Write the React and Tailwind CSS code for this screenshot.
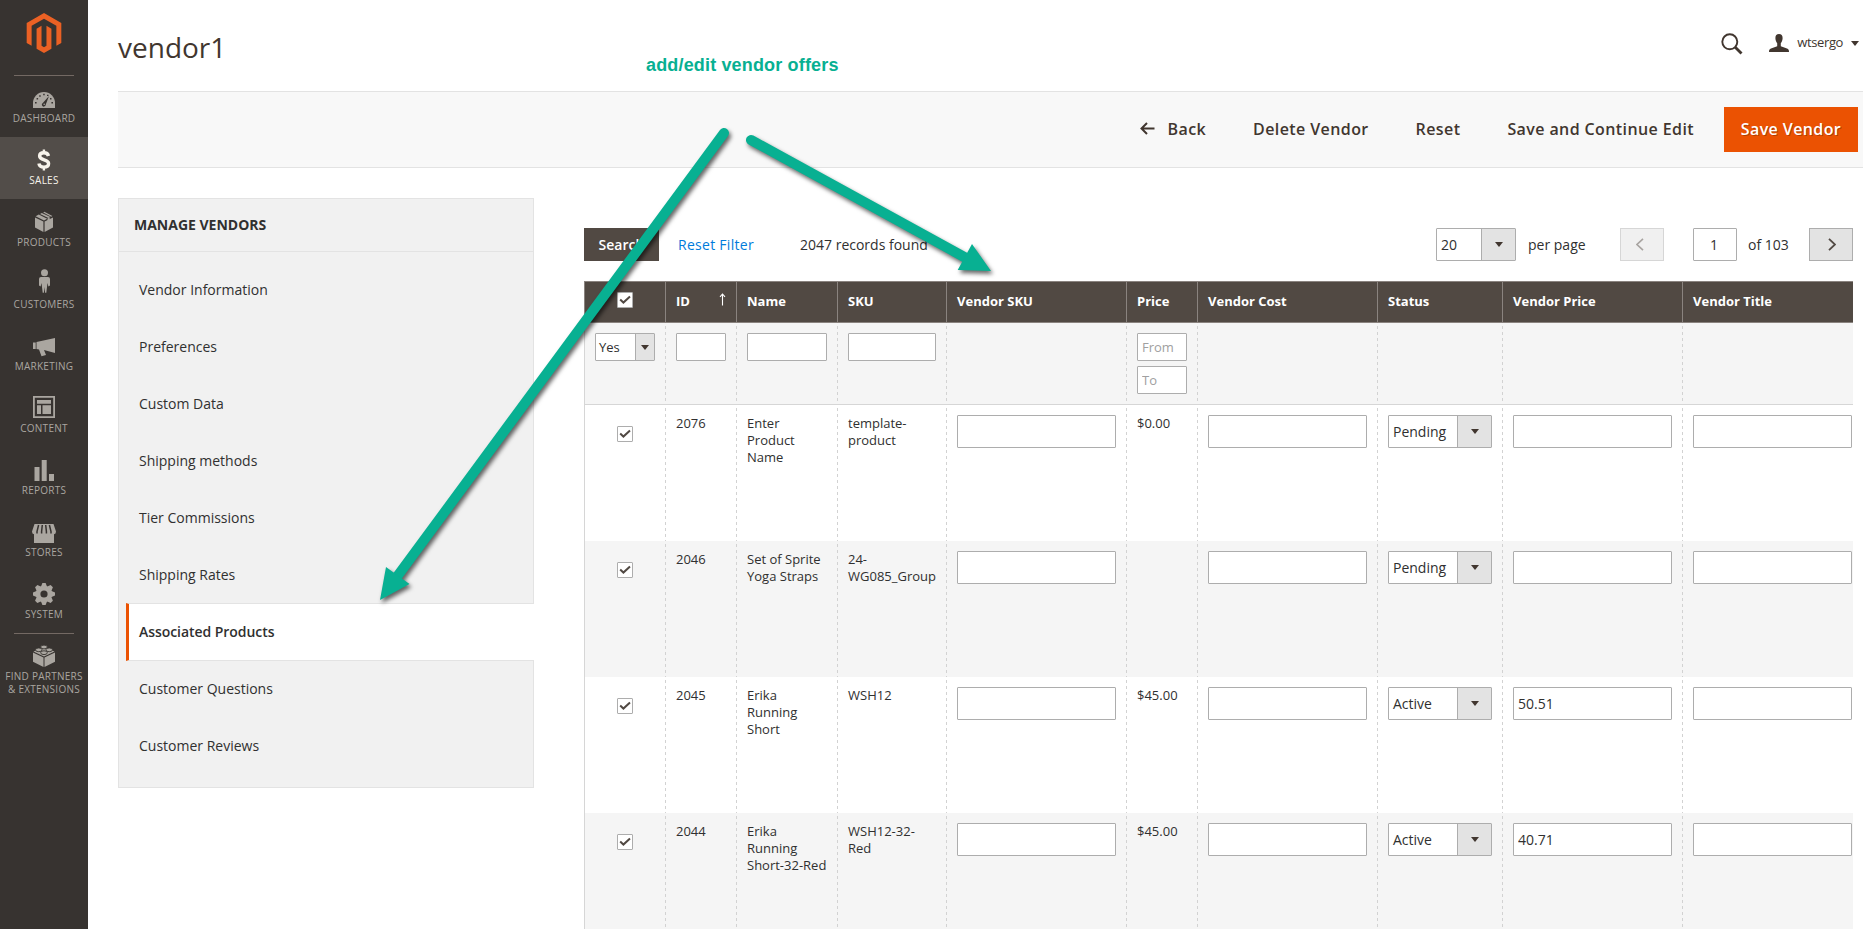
import { useState } from "react";
import clsx from "clsx";

const menu = [
  { label: "Dashboard", icon: DashboardIcon },
  { label: "Sales", icon: SalesIcon, active: true },
  { label: "Products", icon: ProductsIcon },
  { label: "Customers", icon: CustomersIcon },
  { label: "Marketing", icon: MarketingIcon },
  { label: "Content", icon: ContentIcon },
  { label: "Reports", icon: ReportsIcon },
  { label: "Stores", icon: StoresIcon },
  { label: "System", icon: SystemIcon },
];

const tabs = [
  "Vendor Information",
  "Preferences",
  "Custom Data",
  "Shipping methods",
  "Tier Commissions",
  "Shipping Rates",
  "Associated Products",
  "Customer Questions",
  "Customer Reviews",
];

const columns = ["Name", "SKU", "Vendor SKU", "Price", "Vendor Cost", "Status", "Vendor Price", "Vendor Title"];

const products = [
  { id: 2076, name: "Enter Product Name", sku: "template-product", price: "$0.00", status: "Pending", vendorPrice: "" },
  { id: 2046, name: "Set of Sprite Yoga Straps", sku: "24-WG085_Group", price: "", status: "Pending", vendorPrice: "" },
  { id: 2045, name: "Erika Running Short", sku: "WSH12", price: "$45.00", status: "Active", vendorPrice: "50.51" },
  { id: 2044, name: "Erika Running Short-32-Red", sku: "WSH12-32-Red", price: "$45.00", status: "Active", vendorPrice: "40.71" },
];

const gridCols = "grid grid-cols-[81px_71px_101px_109px_180px_71px_180px_125px_180px_171px]";

function MenuSvg({ children }) {
  return (
    <svg width="24" height="28" viewBox="0 0 24 28" className="overflow-visible" fill="currentColor">
      {children}
    </svg>
  );
}

function DashboardIcon() {
  return (
    <MenuSvg>
      <path d="M1 27v-5a11 11 0 0 1 22 0v5z" />
      <g fill="#373330">
        <path d="M17 15l-3.2 8.6a2 2 0 1 1-3-1.7z" />
        <path d="M3 21h1.6v1.4H3zM4.6 17h1.5v1.5H4.6zM7.2 14.2h1.5v1.5H7.2zM11.2 12.8h1.5v1.5h-1.5zM15 13.8h1.5v1.3H15zM18 17h1.5v1.5H18zM19.4 21H21v1.4h-1.6z" />
      </g>
      <circle cx="12.2" cy="23.2" r="0.8" />
    </MenuSvg>
  );
}

function SalesIcon() {
  return (
    <MenuSvg>
      <path
        d="M16.5 13c-.5-2-2-3.200-4.600-3.200-2.700 0-4.300 1.400-4.300 3.300 0 4.800 9 2.700 9 7.400 0 2.300-1.800 3.600-4.700 3.600-2.900 0-4.600-1.300-5-3.600"
        fill="none"
        stroke="currentColor"
        strokeWidth="3.4"
      />
      <path d="M10.700 6.500h2.400v3.500h-2.400zM10.700 23h2.400v4.500h-2.400z" />
    </MenuSvg>
  );
}

function ProductsIcon() {
  return (
    <MenuSvg>
      <path d="M3 12.400l8.400 4V27L3 22.600zM21 12.400l-8.400 4V27l8.400-4.400z" />
      <path d="M3.600 11.200l3.200-1.600 8.400 4.200-3.200 1.600zM8 8.900l1.800-.9 8.600 4.100-2 1zM11.200 7.400l1.200-.6 8 4.200-1.200.7z" />
      <path d="M15.500 13.400l2.200-1v3.200l-2.200 1z" />
    </MenuSvg>
  );
}

function CustomersIcon() {
  return (
    <MenuSvg>
      <circle cx="12.500" cy="5.700" r="3.500" />
      <path d="M9 10h7q2 0 2 2v6.500l-1.600 1-.9-3.500-1.200 9.800h-1.200L12.500 20l-.600 5.800h-1.200L9.500 16l-.900 3.500-1.600-1V12q0-2 2-2z" />
    </MenuSvg>
  );
}

function MarketingIcon() {
  return (
    <MenuSvg>
      <path d="M1 13.500h2.700V20H1zM4.500 13L23 9v15l-11-3 2 5-4.500 1.200L7 20.500l-2.500-.500z" />
    </MenuSvg>
  );
}

function ContentIcon() {
  return (
    <MenuSvg>
      <path d="M1 5h22v22H1zM2.800 6.800v18.400h18.400V6.800z" fillRule="evenodd" />
      <path d="M5 9h14v3.800H5zM5 14.200h4V23H5zM10.500 14.200H19V23h-8.500z" />
    </MenuSvg>
  );
}

function ReportsIcon() {
  return (
    <MenuSvg>
      <path d="M2.500 14h5v14h-5zM9.700 7h5v21h-5zM17 21h5v7h-5z" />
    </MenuSvg>
  );
}

function StoresIcon() {
  return (
    <MenuSvg>
      <path d="M2.500 9h19L24 16.500q0 2.500-2 2.700V28H2v-8.800Q0 19 0 16.500z" />
      <path
        d="M6.600 10L5 16.500v2M10.300 10l-.700 6.500v2M13.700 10l.700 6.500v2M17.400 10l1.600 6.500v2"
        stroke="#373330"
        strokeWidth="1.500"
        fill="none"
      />
    </MenuSvg>
  );
}

function SystemIcon() {
  return (
    <MenuSvg>
      <g transform="translate(12 17)">
        {[0, 45, 90, 135].map((deg) => (
          <path key={deg} d="M-3.200-7L-1.600-11h3.200l1.600 4V7L1.600 11h-3.200l-1.600-4z" transform={`rotate(${deg})`} />
        ))}
        <circle r="8" />
        <circle r="3.600" fill="#373330" />
      </g>
    </MenuSvg>
  );
}

function PartnersIcon() {
  return (
    <MenuSvg>
      <path d="M1 13.500l10.500 5V28L1 22.800zM23 13.500l-10.500 5V28L23 22.800z" />
      <path d="M1.500 12.500L12 8l10.500 4.500L12 17.500z" />
      <g stroke="#373330" strokeWidth="0.900">
        <ellipse cx="12" cy="8" rx="3.300" ry="1.900" />
        <ellipse cx="6.800" cy="10.800" rx="3.300" ry="1.900" />
        <ellipse cx="17.200" cy="10.800" rx="3.300" ry="1.900" />
        <ellipse cx="12" cy="13.700" rx="3.300" ry="1.900" />
      </g>
    </MenuSvg>
  );
}

function Caret() {
  return (
    <svg width="8" height="5" viewBox="0 0 8 5" fill="#41362f">
      <path d="M0 0h8L4 5z" />
    </svg>
  );
}

function Checkbox() {
  return (
    <span className="flex h-4 w-4 items-center justify-center rounded-[1px] border border-[#adadad] bg-white">
      <svg width="14" height="14" viewBox="0 0 14 14" fill="none" stroke="#514943" strokeWidth="2">
        <path d="M2.200 6.600l3.200 3L12 3.500" />
      </svg>
    </span>
  );
}

function Select({ value, small, className }) {
  return (
    <div
      className={clsx(
        "flex rounded-[1px] border border-[#adadad] bg-white",
        small ? "h-7 text-[13px]" : "h-[33px] text-sm",
        className
      )}
    >
      <span className={clsx("flex flex-1 items-center", small ? "pl-[3px]" : "pl-1")}>{value}</span>
      <span
        className={clsx(
          "flex items-center justify-center border-l border-[#adadad] bg-[#e3e3e3]",
          small ? "w-[19px]" : "w-[34px]"
        )}
      >
        <Caret />
      </span>
    </div>
  );
}

function Input({ small, className, ...props }) {
  return (
    <input
      className={clsx(
        "block rounded-[1px] border border-[#adadad] bg-white px-1 text-[#303030] placeholder:text-[#a0a0a0]",
        small ? "h-7 text-[13px]" : "h-[33px] text-sm",
        className || "w-full"
      )}
      {...props}
    />
  );
}

function Cell({ first, className, children }) {
  return (
    <div
      className={clsx(
        "pt-2.5 pr-2.5",
        first
          ? "border-l border-[#d6d6d6] pl-2.5"
          : "bg-[linear-gradient(#d2d2d2_50%,transparent_50%)] bg-[length:1px_6px] bg-[position:0_3px] bg-repeat-y pl-[11px]",
        className
      )}
    >
      {children}
    </div>
  );
}

function Sidebar() {
  return (
    <aside className="flex w-[88px] shrink-0 flex-col items-center bg-[#373330] text-[#aaa6a0]">
      <div className="flex h-[75px] justify-center pt-[13px]">
        <svg width="40" height="40" viewBox="0 0 24 24" fill="#eb6124">
          <path d="M12 24l-4.455-2.572v-12l2.970-1.715v12.001l1.485.902 1.485-.902V7.713l2.971 1.715v12L12 24zM22.391 6v12l-2.969 1.714V7.713L12 3.430 4.574 7.713v12.001L1.609 18V6L12.005 0 22.391 6z" />
        </svg>
      </div>
      <div className="-mb-px h-px w-[60px] bg-[#736963]" />
      {menu.map(({ label, icon: Icon, active }) => (
        <div
          key={label}
          className={clsx(
            "flex h-[62px] w-full flex-col items-center gap-[3px] pt-1.5",
            active && "bg-[#524d49] text-[#f7f3eb]"
          )}
        >
          <Icon />
          <span className="text-[10px] leading-3 tracking-[0.025em] uppercase">{label}</span>
        </div>
      ))}
      <div className="-mb-px h-px w-[60px] bg-[#736963]" />
      <div className="flex w-full flex-col items-center gap-[3px] pt-1.5">
        <PartnersIcon />
        <span className="text-center text-[10px] leading-[13px] tracking-[0.025em] uppercase">
          Find Partners
          <br />
          &amp; Extensions
        </span>
      </div>
    </aside>
  );
}

function Header() {
  return (
    <header className="flex h-[91px] justify-between pr-1">
      <h1 className="pt-7 text-[28px] leading-[38px] text-[#41362f]">vendor1</h1>
      <div className="flex h-[86px] items-center">
        <svg width="22" height="22" viewBox="0 0 22 22" fill="none" stroke="#41362f" className="mt-0.5 mr-[26px]">
          <circle cx="8.800" cy="8.800" r="7.500" strokeWidth="1.900" />
          <path d="M14 14l6.500 6.500" strokeWidth="2.800" />
        </svg>
        <svg width="20" height="18" viewBox="0 0 20 18" fill="#41362f" className="mr-2">
          <path d="M10 0c2.500 0 3.700 1.700 3.600 4.200-.1 2-.8 3.900-1.800 5.100v2.900l6.200 2.300c1.500.6 2 1.300 2 3.500H0c0-2.200.500-2.900 2-3.500l6.200-2.300V9.300C7.200 8.100 6.500 6.200 6.400 4.200 6.300 1.700 7.500 0 10 0z" />
        </svg>
        <span className="mr-2 text-[13px] tracking-[-0.03em] text-[#41362f]">wtsergo</span>
        <Caret />
      </div>
    </header>
  );
}

function PageActions() {
  return (
    <div className="flex h-[77px] items-center justify-end border-y border-[#e3e3e3] bg-[#f8f8f8] pr-[5px] text-base font-semibold tracking-[0.025em] text-[#41362f]">
      <button className="mr-[47px] flex items-center gap-[13px] pb-0.5">
        <svg width="15" height="13" viewBox="0 0 15 13" fill="none" stroke="#41362f" strokeWidth="2">
          <path d="M1.500 6.500H14.500M7 1L1.500 6.500 7 12" />
        </svg>
        Back
      </button>
      <button className="mr-[47px] pb-0.5">Delete Vendor</button>
      <button className="mr-[47px] pb-0.5">Reset</button>
      <button className="mr-[30px] pb-0.5">Save and Continue Edit</button>
      <button className="h-[45px] w-[134px] bg-[#eb5202] pb-0.5 text-white [text-shadow:1px_1px_0_rgba(0,0,0,0.25)]">
        Save Vendor
      </button>
    </div>
  );
}

function VendorTabs({ current, onSelect }) {
  return (
    <nav className="h-[590px] w-[416px] shrink-0 border border-[#e3e3e3] bg-[#f1f1f1]">
      <div className="h-[53px] border-b border-[#e3e3e3] pt-[11px] pl-[15px] text-sm leading-[29px] font-bold uppercase">
        Manage Vendors
      </div>
      <ul className="pt-[9px]">
        {tabs.map((tab) => (
          <li
            key={tab}
            onClick={() => onSelect(tab)}
            className={clsx(
              "flex h-[57px] cursor-pointer items-center text-sm",
              tab === current
                ? "relative z-10 -mr-px -mb-px ml-[7px] h-[58px] border-y border-l-[3px] border-y-[#e3e3e3] border-l-[#eb5202] bg-white pl-2.5 font-semibold tracking-[-0.004em]"
                : "pl-5"
            )}
          >
            {tab}
          </li>
        ))}
      </ul>
    </nav>
  );
}

function Toolbar() {
  return (
    <div className="flex h-[33px] items-center text-sm">
      <button className="h-full w-[75px] bg-[#514943] font-semibold text-white">Search</button>
      <a className="ml-[19px] w-[76px] font-medium tracking-[0.02em] whitespace-nowrap text-[#007bdb]">Reset Filter</a>
      <span className="ml-[46px]">2047 records found</span>
      <div className="ml-auto flex items-center">
        <Select value="20" className="w-20" />
        <span className="ml-3 w-[92px]">per page</span>
        <button className="flex h-[33px] w-11 items-center justify-center border border-[#d6d6d6] bg-[#f0f0f0]">
          <svg width="8" height="13" viewBox="0 0 8 13" fill="none" stroke="#a8a4a1" strokeWidth="1.600" className="-ml-1">
            <path d="M7 0.800L1 6.500l6 5.700" />
          </svg>
        </button>
        <Input defaultValue="1" className="ml-[29px] w-11 pr-[5px] pl-[3px] text-center" />
        <span className="ml-[11px] w-[61px]">of 103</span>
        <button className="flex h-[33px] w-11 items-center justify-center border border-[#adadad] bg-[#e3e3e3]">
          <svg width="8" height="13" viewBox="0 0 8 13" fill="none" stroke="#514943" strokeWidth="1.800" className="ml-0.5">
            <path d="M1 0.800l6 5.700-6 5.700" />
          </svg>
        </button>
      </div>
    </div>
  );
}

function ProductGrid() {
  return (
    <div className="mt-5 w-[1269px] overflow-hidden text-[13px] leading-[17px]">
      <div className={clsx(gridCols, "h-[42px] border-y border-[#8a837f] bg-[#514943] font-bold text-white *:border-l *:border-[#8a837f]")}>
        <div className="flex justify-center pt-2.5">
          <Checkbox />
        </div>
        <div className="flex justify-between px-2.5 pt-[11px]">
          ID
          <svg width="7" height="13" viewBox="0 0 7 13" fill="none" stroke="#fff" strokeWidth="1.100">
            <path d="M3.500 12.500V1M1 3.800L3.500 1 6 3.800" />
          </svg>
        </div>
        {columns.map((column) => (
          <div key={column} className="px-2.5 pt-[11px]">
            {column}
          </div>
        ))}
      </div>

      <div className={clsx(gridCols, "h-[82px] border-b border-[#d6d6d6] bg-[#f5f5f5]")}>
        <Cell first>
          <Select value="Yes" small className="w-[60px]" />
        </Cell>
        <Cell>
          <Input small />
        </Cell>
        <Cell>
          <Input small />
        </Cell>
        <Cell>
          <Input small />
        </Cell>
        <Cell />
        <Cell className="flex flex-col gap-[5px]">
          <Input small placeholder="From" />
          <Input small placeholder="To" />
        </Cell>
        <Cell />
        <Cell />
        <Cell />
        <Cell />
      </div>

      {products.map((product, index) => (
        <div key={product.id} className={clsx(gridCols, "h-[136px]", index % 2 ? "bg-[#f5f5f5]" : "bg-white")}>
          <Cell first className="flex justify-center">
            <div className="pt-[11px]">
              <Checkbox />
            </div>
          </Cell>
          <Cell>{product.id}</Cell>
          <Cell>{product.name}</Cell>
          <Cell>{product.sku}</Cell>
          <Cell>
            <Input />
          </Cell>
          <Cell>{product.price}</Cell>
          <Cell>
            <Input />
          </Cell>
          <Cell>
            <Select value={product.status} />
          </Cell>
          <Cell>
            <Input defaultValue={product.vendorPrice} />
          </Cell>
          <Cell>
            <Input className="w-[159px]" />
          </Cell>
        </div>
      ))}
    </div>
  );
}

// Callout text and arrows that lie over the whole page
function Callout() {
  return (
    <div className="pointer-events-none absolute inset-0 z-20">
      <p className="absolute top-[55px] left-[646px] font-['Liberation_Sans',Arial,sans-serif] text-[18px] leading-[21px] font-bold tracking-[0.16px] whitespace-nowrap text-[#08b092]">
        add/edit vendor offers
      </p>
      <svg
        width="1863"
        height="929"
        viewBox="0 0 1863 929"
        fill="#08b092"
        stroke="#08b092"
        className="absolute inset-0 [filter:drop-shadow(2px_3px_2px_rgba(0,0,0,0.6))]"
      >
        <path d="M724 133L396 578M751 140L966 258" strokeWidth="10" strokeLinecap="round" fill="none" />
        <path d="M380 600l6-33 23.500 17zM991 271l-19-27-14.300 26z" stroke="none" />
      </svg>
    </div>
  );
}

export default function App() {
  const [tab, setTab] = useState("Associated Products");

  return (
    <div className="relative flex h-[929px] w-[1863px] overflow-hidden bg-white font-['Open_Sans',sans-serif] text-[#303030]">
      <Sidebar />
      <main className="flex-1 pl-[30px]">
        <Header />
        <PageActions />
        <div className="flex items-start pt-[30px]">
          <VendorTabs current={tab} onSelect={setTab} />
          <section className="ml-[50px] w-[1269px] pt-[30px]">
            <Toolbar />
            <ProductGrid />
          </section>
        </div>
      </main>
      <Callout />
    </div>
  );
}
